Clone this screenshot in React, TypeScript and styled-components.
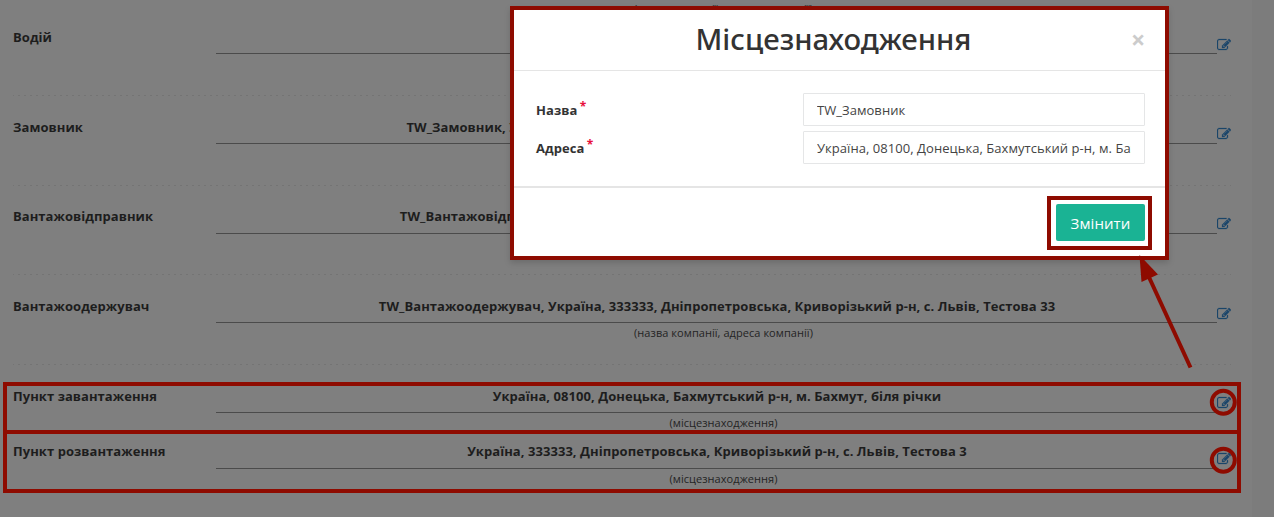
import React from 'react';
import styled, { createGlobalStyle } from 'styled-components';

const MARK = '#8e0b00';

const GlobalStyle = createGlobalStyle`
  *, *::before, *::after { box-sizing: border-box; }
  body {
    margin: 0;
    background: #7c7c7c;
    color: #1d1d1d;
    font: 13px/20px 'Open Sans', 'Noto Sans', sans-serif;
    letter-spacing: 0.055px;
    overflow: hidden;
  }
`;

const Page = styled.div`
  position: relative;
  height: 517px;
  overflow: hidden;
`;

const Sheet = styled.main`
  width: 1252px;
  height: 517px;
  padding: 0 21px 0 13px;
  background: #7f7f7f;
  overflow: hidden;
`;

const TopCaption = styled.div`
  width: 1218px;
  height: 27px;
  padding-left: 203px;
  font-size: 11px;
  line-height: 18px;
  text-align: center;
  color: #242424;
  white-space: nowrap;
`;

const Row = styled.section<{ $height: number }>`
  display: grid;
  grid-template-columns: 203px 1001px 14px;
  align-items: start;
  height: ${(p) => p.$height}px;
`;

const Label = styled.div`
  font-weight: 700;
`;

const Value = styled.div<{ $drop: number }>`
  height: ${(p) => 27 + p.$drop}px;
  padding-left: 1px;
  border-bottom: 1px solid #4b4b4b;
  font-weight: 700;
  text-align: center;
  white-space: nowrap;
`;

const Caption = styled.div`
  padding-left: 14px;
  font-size: 11px;
  line-height: 20px;
  text-align: center;
  color: #242424;
`;

const EditLink = styled.a<{ $top: number }>`
  display: block;
  margin-top: ${(p) => p.$top}px;
  height: 14px;
  color: #1a456a;
  svg { display: block; }
`;

const Divider = styled.div`
  height: 1px;
  background: repeating-linear-gradient(90deg, #747474 0 1px, transparent 1px 5px, #747474 5px 6px);
`;

const Gap = styled.div<{ $h: number }>`
  height: ${(p) => p.$h}px;
`;

const Modal = styled.div`
  position: absolute;
  left: 510px;
  top: 6px;
  width: 659px;
  height: 254px;
  border: 4px solid ${MARK};
  background: #fff;
  color: #333;
  box-shadow: 0 3px 6px rgba(0, 0, 0, 0.15);
`;

const ModalHeader = styled.header`
  display: flex;
  align-items: center;
  height: 61px;
  padding: 0 20px 0 22px;
  border-bottom: 1px solid #e5e5e5;
`;

const Title = styled.h4`
  flex: 1;
  margin: 0 0 2px;
  font-family: 'Noto Sans', sans-serif;
  font-size: 29.25px;
  line-height: 40px;
  font-weight: 500;
  letter-spacing: 0;
  text-align: center;
`;

const Close = styled.button`
  width: 14px;
  margin: -2px 0 0;
  padding: 0;
  border: 0;
  background: none;
  color: #ccc;
  font: 700 25px/25px 'Open Sans', sans-serif;
`;

const ModalBody = styled.div`
  display: flex;
  flex-direction: column;
  gap: 5px;
  height: 117px;
  padding: 22px 20px 0 22px;
  border-bottom: 2px solid #e5e5e5;
`;

const Field = styled.label`
  display: grid;
  grid-template-columns: 267px 342px;
  align-items: center;
  height: 33px;
  font-weight: 700;
`;

const Star = styled.sup`
  margin-left: -1px;
  color: #e8113c;
  font-size: 12px;
  line-height: 0;
  vertical-align: 4px;
`;

const Input = styled.input`
  width: 342px;
  height: 33px;
  padding: 0 13px;
  border: 1px solid #e5e6e7;
  border-radius: 1px;
  background: #fff;
  color: #444;
  font: 13px 'Open Sans', 'Noto Sans', sans-serif;
  letter-spacing: 0.05px;
`;

const ModalFooter = styled.footer`
  display: flex;
  justify-content: flex-end;
  padding: 8px 13px;
`;

const ButtonMark = styled.div`
  width: 105px;
  height: 54px;
  padding: 4px 3px 5px 5px;
  border: 4px solid ${MARK};
`;

const Submit = styled.button`
  display: block;
  width: 89px;
  height: 37px;
  padding: 2px 0 0;
  border: 0;
  border-radius: 2px;
  background: #1ab394;
  color: #fff;
  font: 15px/35px 'Open Sans', 'Noto Sans', sans-serif;
  letter-spacing: 0.1px;
`;

const Annotations = styled.svg`
  position: absolute;
  inset: 0;
  pointer-events: none;
`;

const EditIcon = () => (
  <svg width="14" height="14" viewBox="0 0 1792 1792" fill="currentColor" stroke="currentColor" strokeWidth="30">
    <path d="M888 1184l116-116-152-152-116 116v56h96v96h56zm440-720q-16-16-33 1l-350 350q-17 17-1 33t33-1l350-350q17-17 1-33zm80 594v190q0 119-84.5 203.5t-203.5 84.5h-832q-119 0-203.5-84.5t-84.5-203.5v-832q0-119 84.5-203.5t203.5-84.5h832q63 0 117 25 15 7 18 23 3 17-9 29l-49 49q-14 14-32 8-23-6-45-6h-832q-66 0-113 47t-47 113v832q0 66 47 113t113 47h832q66 0 113-47t47-113v-126q0-13 9-22l64-64q15-15 35-7t20 29zm-96-738l288 288-672 672h-288v-288zm444 132l-92 92-288-288 92-92q28-28 68-28t68 28l152 152q28 28 28 68t-28 68z" />
  </svg>
);

interface RowData {
  label: string;
  value: string;
  caption: string;
  height: number;
  drop: number;
  icon: number;
  gap?: number;
}

const company = '(назва компанії, адреса компанії)';
const place = '(місцезнаходження)';

const rows: RowData[] = [
  { label: 'Водій', value: '', caption: '', height: 68, drop: 0, icon: 11, gap: 21 },
  { label: 'Замовник', value: 'TW_Замовник, Україна, 333333, Дніпропетровська, Криворізький р-н, с. Львів, Тестова 333.', caption: company, height: 68, drop: 0, icon: 10, gap: 20 },
  { label: 'Вантажовідправник', value: 'TW_Вантажовідправник, Україна, 08100, Донецька, Бахмутський р-н, м. Бахмут, Тестова 333.', caption: company, height: 68, drop: 1, icon: 11, gap: 21 },
  { label: 'Вантажоодержувач', value: 'TW_Вантажоодержувач, Україна, 333333, Дніпропетровська, Криворізький р-н, с. Львів, Тестова 33', caption: company, height: 68, drop: 0, icon: 11, gap: 21 },
  { label: 'Пункт завантаження', value: 'Україна, 08100, Донецька, Бахмутський р-н, м. Бахмут, біля річки', caption: place, height: 55, drop: 0, icon: 10 },
  { label: 'Пункт розвантаження', value: 'Україна, 333333, Дніпропетровська, Криворізький р-н, с. Львів, Тестова 3', caption: place, height: 55, drop: 1, icon: 11 },
];

export default function App() {
  return (
    <Page>
      <GlobalStyle />
      <Sheet>
        <TopCaption>{company}</TopCaption>
        {rows.map((r) => (
          <React.Fragment key={r.label}>
            <Row $height={r.height}>
              <Label>{r.label}</Label>
              <div>
                <Value $drop={r.drop}>{r.value}</Value>
                <Caption>{r.caption}</Caption>
              </div>
              <EditLink $top={r.icon}><EditIcon /></EditLink>
            </Row>
            {r.gap && (
              <>
                <Divider />
                <Gap $h={r.gap} />
              </>
            )}
          </React.Fragment>
        ))}
      </Sheet>
      <Modal>
        <ModalHeader>
          <Title>Місцезнаходження</Title>
          <Close>×</Close>
        </ModalHeader>
        <ModalBody>
          <Field>
            <span>Назва <Star>*</Star></span>
            <Input defaultValue="TW_Замовник" />
          </Field>
          <Field>
            <span>Адреса <Star>*</Star></span>
            <Input defaultValue="Україна, 08100, Донецька, Бахмутський р-н, м. Бахмут, біля річки" />
          </Field>
        </ModalBody>
        <ModalFooter>
          <ButtonMark>
            <Submit>Змінити</Submit>
          </ButtonMark>
        </ModalFooter>
      </Modal>
      <Annotations width="1274" height="517" fill="none" stroke={MARK} strokeWidth="4">
        <rect x="5" y="384" width="1234" height="107" />
        <path d="M5 432H1239" />
        <circle cx="1223.3" cy="402.3" r="11.5" />
        <circle cx="1223.3" cy="460.3" r="11.5" />
        <path d="M1190.5 367.5L1148 275" />
        <path d="M1139.5 255L1158 274.5L1141.5 282Z" fill={MARK} stroke="none" />
      </Annotations>
    </Page>
  );
}
